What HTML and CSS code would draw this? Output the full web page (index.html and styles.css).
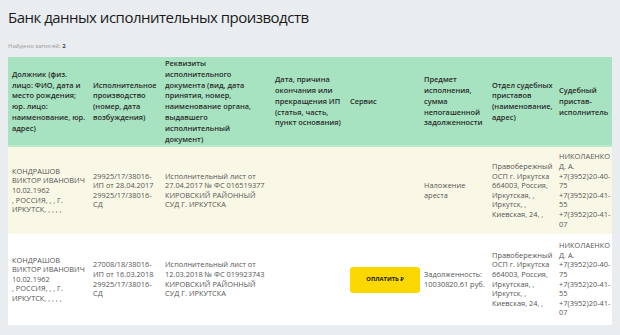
FILE: index.html
```html
<!DOCTYPE html>
<html lang="ru">
<head>
<meta charset="utf-8">
<link rel="stylesheet" href="styles.css">
</head>
<body>
<h1 class="title">Банк данных исполнительных производств</h1>
<div class="found">Найдено записей: <b>2</b></div>
<table class="results">
  <colgroup>
    <col class="c1"><col class="c2"><col class="c3"><col class="c4"><col class="c5"><col class="c6"><col class="c7"><col class="c8">
  </colgroup>
  <thead>
    <tr>
      <th>Должник (физ.<br>лицо: ФИО, дата и<br>место рождения;<br>юр. лицо:<br>наименование, юр.<br>адрес)</th>
      <th>Исполнительное<br>производство<br>(номер, дата<br>возбуждения)</th>
      <th>Реквизиты<br>исполнительного<br>документа (вид, дата<br>принятия, номер,<br>наименование органа,<br>выдавшего<br>исполнительный<br>документ)</th>
      <th>Дата, причина<br>окончания или<br>прекращения ИП<br>(статья, часть,<br>пункт основания)</th>
      <th>Сервис</th>
      <th>Предмет<br>исполнения,<br>сумма<br>непогашенной<br>задолженности</th>
      <th>Отдел судебных<br>приставов<br>(наименование,<br>адрес)</th>
      <th>Судебный<br>пристав-<br>исполнитель</th>
    </tr>
  </thead>
  <tbody>
    <tr class="odd">
      <td>КОНДРАШОВ<br>ВИКТОР ИВАНОВИЧ<br>10.02.1962<br>, РОССИЯ, , , Г.<br>ИРКУТСК, , , , ,</td>
      <td>29925/17/38016-<br>ИП от 28.04.2017<br>29925/17/38016-<br>СД</td>
      <td>Исполнительный лист от<br>27.04.2017 № ФС 016519377<br>КИРОВСКИЙ РАЙОННЫЙ<br>СУД Г. ИРКУТСКА</td>
      <td></td>
      <td></td>
      <td>Наложение<br>ареста</td>
      <td>Правобережный<br>ОСП г. Иркутска<br>664003, Россия,<br>Иркутская, ,<br>Иркутск, ,<br>Киевская, 24, ,</td>
      <td>НИКОЛАЕНКО<br>Д. А.<br>+7(3952)20-40-<br>75<br>+7(3952)20-41-<br>55<br>+7(3952)20-41-<br>07</td>
    </tr>
    <tr class="even">
      <td>КОНДРАШОВ<br>ВИКТОР ИВАНОВИЧ<br>10.02.1962<br>, РОССИЯ, , , Г.<br>ИРКУТСК, , , , ,</td>
      <td>27008/18/38016-<br>ИП от 16.03.2018<br>29925/17/38016-<br>СД</td>
      <td>Исполнительный лист от<br>12.03.2018 № ФС 019923743<br>КИРОВСКИЙ РАЙОННЫЙ<br>СУД Г. ИРКУТСКА</td>
      <td></td>
      <td><a class="pay" href="#">ОПЛАТИТЬ ₽</a></td>
      <td>Задолженность:<br>10030820.61 руб.</td>
      <td>Правобережный<br>ОСП г. Иркутска<br>664003, Россия,<br>Иркутская, ,<br>Иркутск, ,<br>Киевская, 24, ,</td>
      <td>НИКОЛАЕНКО<br>Д. А.<br>+7(3952)20-40-<br>75<br>+7(3952)20-41-<br>55<br>+7(3952)20-41-<br>07</td>
    </tr>
  </tbody>
</table>
</body>
</html>
```
FILE: styles.css
```css
html, body {
  margin: 0;
  padding: 0;
  background: #e9edf0;
  font-family: "Open Sans", "Noto Sans", sans-serif;
  color: #333;
}
body {
  padding: 0 8px;
  overflow: hidden;
}
.title {
  margin: 0;
  padding-top: 5px;
  font-size: 15px;
  letter-spacing: -0.5px;
  font-weight: 400;
  color: #1a1a1a;
  line-height: 24px;
}
.found {
  margin-top: 12px;
  font-size: 6px;
  color: #999;
  line-height: 10px;
}
.found b {
  color: #444;
}
.results {
  margin-top: 6px;
  border-collapse: collapse;
  table-layout: fixed;
  width: 604px;
}
.c1 { width: 81px; }
.c2 { width: 72px; }
.c3 { width: 110px; }
.c4 { width: 75px; }
.c5 { width: 74px; }
.c6 { width: 68px; }
.c7 { width: 67px; }
.c8 { width: 57px; }
.results th {
  background: #a7e3c0;
  border-bottom: 2px solid #b8ebcc;
  text-align: left;
  vertical-align: middle;
  font-size: 7.4px;
  font-weight: 600;
  line-height: 10.8px;
  color: #2a2a2a;
  padding: 1px 0 1px 4px;
  white-space: nowrap;
}
.results td {
  vertical-align: middle;
  font-size: 7.4px;
  line-height: 9.6px;
  color: #555;
  padding: 5px 0 5px 4px;
  white-space: nowrap;
}
.results tr.odd td { background: #f9f8e6; }
.results tr.even td {
  background: #ffffff;
  padding-top: 7px;
  padding-bottom: 7px;
}
.pay {
  display: flex;
  align-items: center;
  justify-content: center;
  width: 70px;
  height: 26px;
  background: #fcd800;
  border-radius: 3px;
  color: #111;
  font-size: 5.8px;
  font-weight: 700;
  text-decoration: none;
}
```
